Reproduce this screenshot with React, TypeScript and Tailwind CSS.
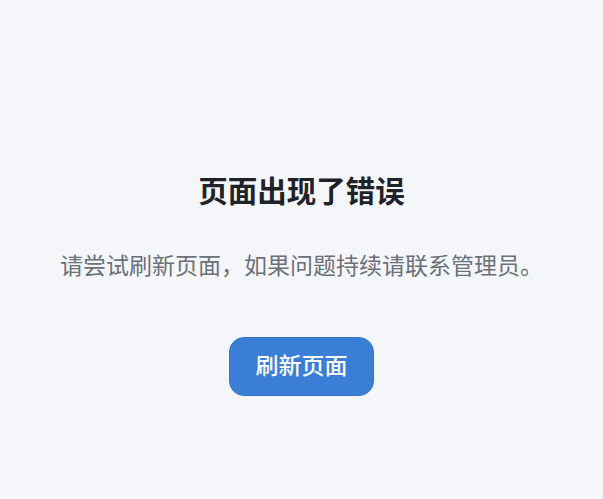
export default function App() {
    const handleReload = () => {
        window.location.reload();
    };

    return (
        <div className="min-h-screen bg-[#f5f6fa] flex flex-col items-center pt-[171px] font-['Inter','Noto_Sans_CJK_SC',sans-serif]">
            <h1 className="text-[29.5px] leading-[40px] font-bold text-[#1f2329]">页面出现了错误</h1>
            <p className="mt-[39px] text-[23px] leading-[32px] text-[#6b7079]">
                请尝试刷新页面，如果问题持续请联系管理员。
            </p>
            <button
                onClick={handleReload}
                className="mt-[55px] h-[59px] w-[145px] rounded-[15px] bg-[#3a7fd5] border border-[#3674c4] text-white text-[23px] font-medium"
            >
                刷新页面
            </button>
        </div>
    );
}
